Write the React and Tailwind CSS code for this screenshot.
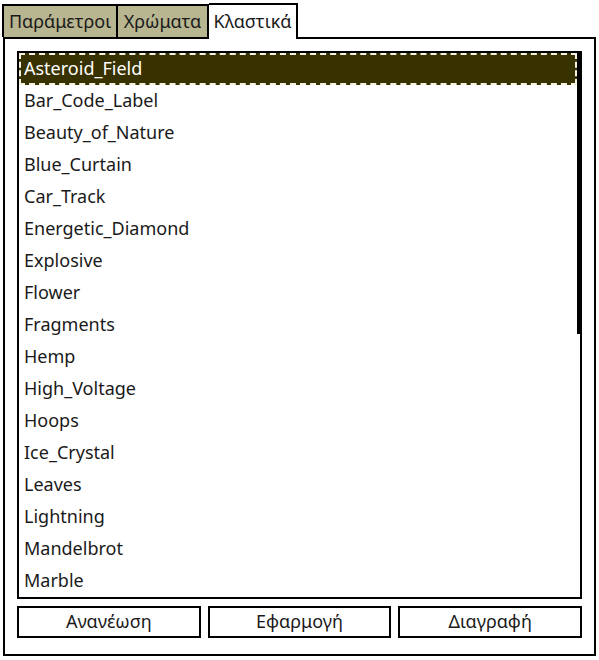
import React, { useState } from 'react'

const items = [
  'Asteroid_Field',
  'Bar_Code_Label',
  'Beauty_of_Nature',
  'Blue_Curtain',
  'Car_Track',
  'Energetic_Diamond',
  'Explosive',
  'Flower',
  'Fragments',
  'Hemp',
  'High_Voltage',
  'Hoops',
  'Ice_Crystal',
  'Leaves',
  'Lightning',
  'Mandelbrot',
  'Marble',
]

function App() {
  const [selected, setSelected] = useState('Asteroid_Field')

  return (
    <div className="w-[599px] h-[660px] bg-white text-[#1a1a1a] text-[18px] font-['Noto_Sans',sans-serif] overflow-hidden">
      {/* Tabs */}
      <div className="flex items-end h-[37px] pl-[2px]">
        <div className="h-[33px] w-[116px] border-2 border-b-0 border-black bg-[#b8b690] flex items-center justify-center leading-none pb-[1px]">
          Παράμετροι
        </div>
        <div className="h-[33px] w-[91px] border-2 border-l-0 border-b-0 border-black bg-[#b8b690] flex items-center justify-center leading-none pb-[1px]">
          Χρώματα
        </div>
        <div className="relative z-10 h-[36px] w-[89px] border-2 border-l-0 border-b-0 border-black bg-white flex items-center justify-center leading-none -mb-[2px] pb-[3px]">
          Κλαστικά
        </div>
      </div>

      {/* Panel */}
      <div className="ml-[3px] w-[593px] h-[619px] border-2 border-black px-[12px] pt-[12px] flex flex-col">
        <div className="h-[548px] border-2 border-black flex overflow-hidden">
          <div className="flex-1">
            {items.map(item =>
              item === selected ? (
                <div
                  key={item}
                  onClick={() => setSelected(item)}
                  className="h-[32px] border-2 border-dashed border-[#f4f2e0] bg-[#383100] text-white flex items-center pl-[3px] pb-[2px]"
                >
                  {item}
                </div>
              ) : (
                <div
                  key={item}
                  onClick={() => setSelected(item)}
                  className="h-[32px] flex items-center pl-[5px] pb-[2px]"
                >
                  {item}
                </div>
              )
            )}
          </div>
          <div className="w-[3px]">
            <div className="h-[281px] bg-black" />
          </div>
        </div>
        <div className="grid grid-cols-3 gap-[7px] mt-[7px]">
          <button className="h-[32px] border-2 border-black bg-white pb-[2px]">Ανανέωση</button>
          <button className="h-[32px] border-2 border-black bg-white pb-[2px]">Εφαρμογή</button>
          <button className="h-[32px] border-2 border-black bg-white pb-[2px]">Διαγραφή</button>
        </div>
      </div>
    </div>
  )
}

export default App
